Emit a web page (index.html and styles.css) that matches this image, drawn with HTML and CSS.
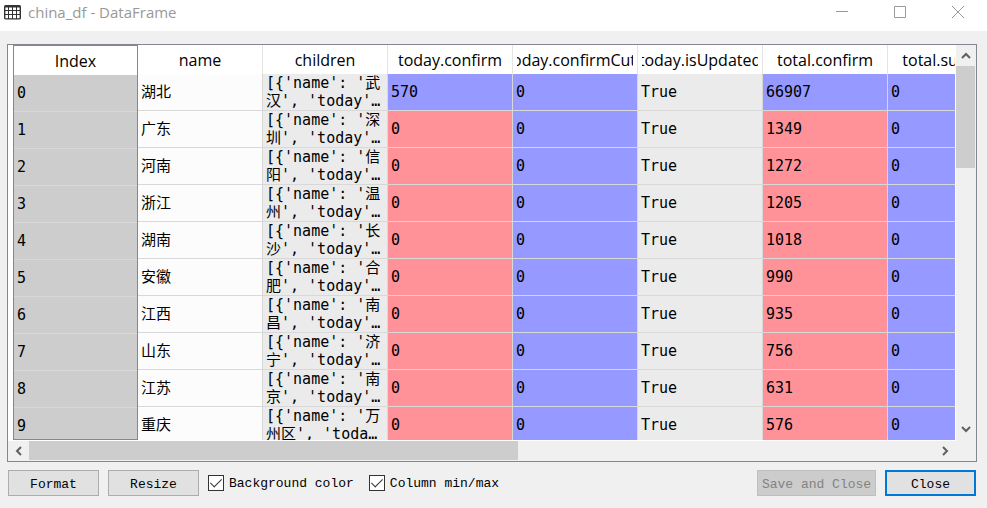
FILE: index.html
```html
<!DOCTYPE html>
<html lang="en">
<head>
    <meta charset="UTF-8">
    <meta name="viewport" content="width=device-width, initial-scale=1.0">
    <title>china_df - DataFrame</title>
    <link rel="stylesheet" href="styles.css">
</head>
<body>

    <header class="titlebar">
        <svg class="app-icon" width="17" height="15" viewBox="0 0 17 15" fill="none" stroke="#333" aria-hidden="true">
            <rect x=".7" y=".7" width="15.6" height="13.2" rx="1" stroke-width="1.4"/>
            <path d="M1 1.5h15" stroke-width="2"/>
            <path d="M1 5.5h15M1 9.5h15M4.5 2v12M8.5 2v12M12.5 2v12"/>
        </svg>
        <h1>china_df - DataFrame</h1>
        <div class="window-buttons">
            <button aria-label="Minimize"><svg width="12" height="12" viewBox="0 0 12 12"><path d="M0 5.5h12"/></svg></button>
            <button aria-label="Maximize"><svg width="12" height="12" viewBox="0 0 12 12"><path d="M.5.5h11v11H.5z"/></svg></button>
            <button aria-label="Close window"><svg width="12" height="12" viewBox="0 0 12 12"><path d="M0 0l12 12M12 0L0 12"/></svg></button>
        </div>
    </header>

    <main class="frame">
        <div class="view">
            <div class="index-box">
                <table class="grid">
                    <thead><tr><th>Index</th></tr></thead>
                    <tbody id="indexBody"></tbody>
                </table>
            </div>
            <div class="data-box">
                <table class="grid data">
                    <thead><tr id="dataHead"></tr></thead>
                    <tbody id="dataBody"></tbody>
                </table>
            </div>
        </div>
        <div class="scroll scroll-v">
            <button aria-label="Scroll up"><svg width="10" height="7" viewBox="0 0 10 7"><path d="M1 6l4-4 4 4"/></svg></button>
            <div class="track"><div class="thumb"></div></div>
            <button aria-label="Scroll down"><svg width="10" height="7" viewBox="0 0 10 7"><path d="M1 1l4 4 4-4"/></svg></button>
        </div>
        <div class="scroll scroll-h">
            <button aria-label="Scroll left"><svg width="7" height="10" viewBox="0 0 7 10"><path d="M6 1L2 5l4 4"/></svg></button>
            <div class="track"><div class="thumb"></div></div>
            <button aria-label="Scroll right"><svg width="7" height="10" viewBox="0 0 7 10"><path d="M1 1l4 4-4 4"/></svg></button>
        </div>
    </main>

    <footer class="toolbar">
        <button class="btn">Format</button>
        <button class="btn">Resize</button>
        <label class="check"><input type="checkbox" checked>Background color</label>
        <label class="check"><input type="checkbox" checked>Column min/max</label>
        <button class="btn btn-save" disabled>Save and Close</button>
        <button class="btn btn-default">Close</button>
    </footer>

    <script>
        const columns = ['name', 'children', 'today.confirm', 'today.confirmCuts',
            'today.isUpdated', 'total.confirm', 'total.suspect'];

        // name, children (two lines), today.confirm, total.confirm
        const rows = [
            ['湖北', "[{'name': '武", "汉', 'today'…", 570, 66907],
            ['广东', "[{'name': '深", "圳', 'today'…", 0, 1349],
            ['河南', "[{'name': '信", "阳', 'today'…", 0, 1272],
            ['浙江', "[{'name': '温", "州', 'today'…", 0, 1205],
            ['湖南', "[{'name': '长", "沙', 'today'…", 0, 1018],
            ['安徽', "[{'name': '合", "肥', 'today'…", 0, 990],
            ['江西', "[{'name': '南", "昌', 'today'…", 0, 935],
            ['山东', "[{'name': '济", "宁', 'today'…", 0, 756],
            ['江苏', "[{'name': '南", "京', 'today'…", 0, 631],
            ['重庆', "[{'name': '万", "州区', 'toda…", 0, 576]
        ];

        document.getElementById('dataHead').innerHTML =
            columns.map(c => `<th><div class="head-text"><span>${c}</span></div></th>`).join('');

        document.getElementById('indexBody').innerHTML =
            rows.map((r, i) => `<tr><td class="index">${i}</td></tr>`).join('');

        // The highest value of a column is blue, the lowest is red
        document.getElementById('dataBody').innerHTML = rows.map((r, i) => {
            const heat = i === 0 ? 'high' : 'low';
            return `<tr>
                <td class="text">${r[0]}</td>
                <td class="object">${r[1]}<br>${r[2]}</td>
                <td class="${heat}">${r[3]}</td>
                <td class="high">0</td>
                <td class="object">True</td>
                <td class="${heat}">${r[4]}</td>
                <td class="high">0</td>
            </tr>`;
        }).join('');
    </script>

</body>
</html>
```
FILE: styles.css
```css
/* Global reset */
* {
    margin: 0;
    padding: 0;
    box-sizing: border-box;
}

body {
    height: 100vh;
    display: flex;
    flex-direction: column;
    overflow: hidden;
    background: #f0f0f0;
    color: #000;
    font-family: "Open Sans", "Noto Sans CJK SC", sans-serif;
}

button {
    border: none;
    background: none;
}

/* Title bar */
.titlebar {
    height: 31px;
    flex: none;
    display: flex;
    align-items: center;
    padding: 0 0 7px 4px;
    background: #fff;
}

.titlebar h1 {
    margin-left: 7px;
    font-size: 15px;
    font-weight: normal;
    color: #999;
}

.window-buttons {
    margin-left: auto;
    display: flex;
}

.window-buttons button {
    width: 58px;
    height: 24px;
    display: flex;
    align-items: center;
    justify-content: center;
}

.window-buttons svg {
    fill: none;
    stroke: #999;
}

/* Table frame */
.frame {
    flex: 1;
    min-height: 0;
    margin: 13px 10px 8px 7px;
    display: grid;
    grid-template-columns: minmax(0, 1fr) 20px;
    grid-template-rows: minmax(0, 1fr) 21px;
    border: 1px solid #828790;
    background: #f0f0f0;
}

.view {
    display: flex;
    min-width: 0;
    min-height: 0;
    padding-left: 5px;
    background: #fff;
    border-right: 1px solid #fff;
}

.index-box {
    width: 125px;
    flex: none;
    overflow: hidden;
    border: 1px solid #828790;
}

.data-box {
    flex: 1;
    min-width: 0;
    overflow: hidden;
}

.grid {
    width: 100%;
    table-layout: fixed;
    border-collapse: separate;
    border-spacing: 0;
}

.data {
    width: 875px;
}

.grid th {
    height: 29px;
    padding: 0 4px;
    background: #fff;
    border-right: 1px solid #e5e5e5;
    font-size: 16px;
    font-weight: normal;
    line-height: 22px;
}

.index-box th {
    border-right: none;
}

.head-text {
    display: flex;
    justify-content: center;
    overflow: hidden;
    white-space: nowrap;
}

.grid td {
    height: 37px;
    padding: 0 3px;
    border-right: 1px solid #d8d8d8;
    border-bottom: 1px solid #d8d8d8;
    font-family: "DejaVu Sans Mono", "Noto Sans CJK SC", monospace;
    font-size: 15px;
    line-height: 18px;
    white-space: nowrap;
    overflow: hidden;
}

.grid .index {
    background: #cdcdcd;
    border-right: none;
}

.text {
    background: #fcfcfc;
}

.object {
    background: #ebebeb;
}

.high {
    background: #9699ff;
}

.low {
    background: #ff9299;
}

/* Scroll bars */
.scroll {
    display: flex;
}

.scroll button {
    flex: none;
    display: flex;
    align-items: center;
    justify-content: center;
}

.scroll svg {
    fill: none;
    stroke: #606060;
    stroke-width: 2;
}

.track {
    flex: 1;
}

.thumb {
    background: #cdcdcd;
}

.scroll-v {
    flex-direction: column;
    padding-right: 1px;
}

.scroll-v button {
    height: 21px;
}

.scroll-v .thumb {
    height: 29%;
}

.scroll-h {
    padding-bottom: 1px;
    border-top: 1px solid #fff;
}

.scroll-h button {
    width: 21px;
}

.scroll-h .thumb {
    width: 54%;
    height: 100%;
}

/* Bottom toolbar */
.toolbar {
    flex: none;
    display: flex;
    align-items: center;
    gap: 9px;
    padding: 0 11px 12px 8px;
    font-family: "Liberation Mono", monospace;
    font-size: 13px;
}

.btn {
    width: 91px;
    height: 26px;
    padding-top: 2px;
    background: #e1e1e1;
    border: 1px solid #adadad;
    font-family: inherit;
    font-size: inherit;
    color: #000;
}

.btn-save {
    width: 119px;
    margin-left: auto;
    background: #ccc;
    border-color: #bfbfbf;
    color: #838383;
}

.btn-default {
    border: 2px solid #0078d7;
}

.check {
    display: flex;
    align-items: center;
    gap: 5px;
    margin-right: 6px;
}

.check input {
    appearance: none;
    width: 16px;
    height: 16px;
    display: flex;
    justify-content: center;
    background: #fff;
    border: 1px solid #333;
}

.check input:checked::after {
    content: "";
    width: 5px;
    height: 10px;
    border: solid #333;
    border-width: 0 1px 1px 0;
    transform: rotate(45deg);
}
```
